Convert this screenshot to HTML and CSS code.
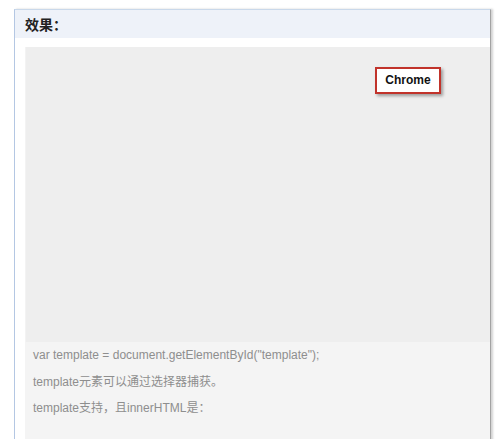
FILE: index.html
```html
<!DOCTYPE html>
<html lang="zh">
<head>
<meta charset="utf-8">
<link rel="stylesheet" href="styles.css">
</head>
<body>
<div class="panel">
  <div class="panel-head">效果：</div>
  <div class="panel-body">
    <div class="demo">
      <div class="badge">Chrome</div>
    </div>
    <div class="output">
      <p>var template = document.getElementById("template");</p>
      <p>template元素可以通过选择器捕获。</p>
      <p>template支持，且innerHTML是：</p>
    </div>
  </div>
</div>
</body>
</html>
```
FILE: styles.css
```css
html, body {
  margin: 0;
  padding: 0;
  background: #fff;
}
body {
  padding: 9px 0 0 14px;
  font-family: "Liberation Sans", Arial, "Noto Sans CJK SC", sans-serif;
  overflow: hidden;
  height: 439px;
  box-sizing: border-box;
}
.panel {
  width: 475px;
  border-top: 1px solid #c9d8ea;
  border-left: 1px solid #b4c7e3;
  border-right: 1px solid #a3a3a3;
  box-shadow: 2px 0 2px rgba(0,0,0,0.18);
  height: 440px;
  background: #fff;
}
.panel-head {
  height: 28px;
  line-height: 28px;
  background: #eef2f9;
  padding-left: 10px;
  font-size: 14px;
  font-weight: bold;
  color: #222;
  font-family: "Noto Sans CJK SC", sans-serif;
}
.panel-body {
  padding: 9px 0 0 10px;
}
.demo {
  position: relative;
  height: 295px;
  background: #eeeeee;
  border-left: 1px solid #f3f3f3;
}
.badge {
  position: absolute;
  left: 349px;
  top: 20px;
  width: 62px;
  height: 23px;
  border: 2px solid #c1332b;
  background: #fff;
  box-shadow: 2px 2px 3px rgba(0,0,0,0.35);
  font-size: 12px;
  font-weight: bold;
  line-height: 23px;
  text-align: center;
  color: #111;
}
.output {
  background: #f4f4f4;
  padding: 0 0 20px 8px;
  color: #8e8e8e;
  font-size: 12px;
}
.output p {
  margin: 0;
  line-height: 26.5px;
}
```
